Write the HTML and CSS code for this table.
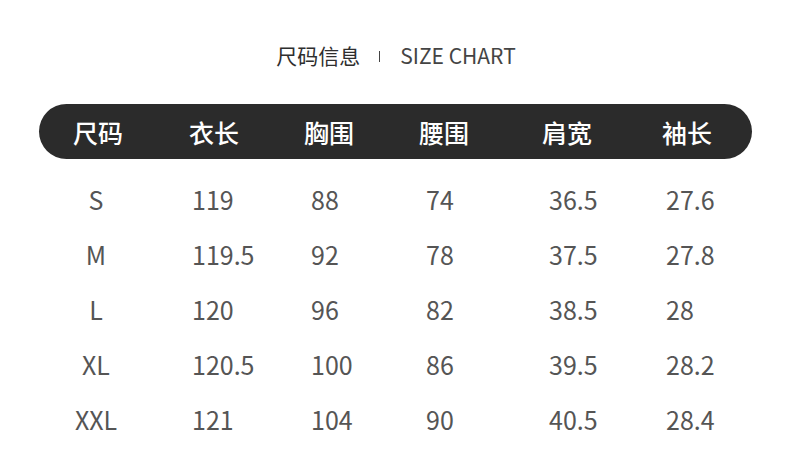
FILE: index.html
```html
<!DOCTYPE html>
<html lang="zh-CN">
<head>
<meta charset="utf-8">
<title>尺码信息 SIZE CHART</title>
<link rel="stylesheet" href="styles.css">
</head>
<body>
<div class="page">
  <div class="title">
    <span class="title-cn">尺码信息</span>
    <span class="title-sep"></span>
    <span class="title-en">SIZE CHART</span>
  </div>
  <div class="chart">
    <div class="row head">
      <div class="cell c1">尺码</div>
      <div class="cell c2">衣长</div>
      <div class="cell c3">胸围</div>
      <div class="cell c4">腰围</div>
      <div class="cell c5">肩宽</div>
      <div class="cell c6">袖长</div>
    </div>
    <div class="body">
      <div class="row data">
        <div class="cell c1">S</div><div class="cell c2">119</div><div class="cell c3">88</div><div class="cell c4">74</div><div class="cell c5">36.5</div><div class="cell c6">27.6</div>
      </div>
      <div class="row data">
        <div class="cell c1">M</div><div class="cell c2">119.5</div><div class="cell c3">92</div><div class="cell c4">78</div><div class="cell c5">37.5</div><div class="cell c6">27.8</div>
      </div>
      <div class="row data">
        <div class="cell c1">L</div><div class="cell c2">120</div><div class="cell c3">96</div><div class="cell c4">82</div><div class="cell c5">38.5</div><div class="cell c6">28</div>
      </div>
      <div class="row data">
        <div class="cell c1">XL</div><div class="cell c2">120.5</div><div class="cell c3">100</div><div class="cell c4">86</div><div class="cell c5">39.5</div><div class="cell c6">28.2</div>
      </div>
      <div class="row data">
        <div class="cell c1">XXL</div><div class="cell c2">121</div><div class="cell c3">104</div><div class="cell c4">90</div><div class="cell c5">40.5</div><div class="cell c6">28.4</div>
      </div>
    </div>
  </div>
</div>
</body>
</html>
```
FILE: styles.css
```css
html, body {
  margin: 0;
  padding: 0;
  background: #ffffff;
}

body {
  font-family: "Noto Sans CJK SC", "Noto Sans", sans-serif;
  width: 790px;
  height: 461px;
  overflow: hidden;
}

.page {
  padding-top: 41px;
}

.title {
  display: flex;
  justify-content: center;
  align-items: center;
  height: 28px;
  padding-left: 2px;
}

.title-cn {
  font-size: 21px;
  line-height: 28px;
  color: #2e2e2e;
}

.title-sep {
  width: 1px;
  height: 11px;
  background: #444;
  margin: 2px 20px 0 19px;
}

.title-en {
  font-size: 21px;
  line-height: 28px;
  color: #444444;
}

.chart {
  margin: 35px 38px 0 39px;
}

.row {
  display: grid;
  grid-template-columns: 150px 115px 115px 123px 120px 1fr;
  align-items: center;
}

.head {
  height: 55px;
  border-radius: 28px;
  background: #2b2b2b;
  color: #ffffff;
  font-size: 25px;
  font-weight: 500;
}

.head .c1 {
  text-align: center;
  padding-right: 32px;
}

.body {
  margin-top: 12px;
}

.data {
  height: 55px;
  color: #555555;
  font-size: 25px;
}

.cell {
  line-height: 30px;
}

.data .c1 {
  text-align: center;
  padding-right: 36px;
}

.data .c2 { padding-left: 3px; }
.data .c3 { padding-left: 7px; }
.data .c4 { padding-left: 7px; }
.data .c5 { padding-left: 7px; }
.data .c6 { padding-left: 4px; }
```
